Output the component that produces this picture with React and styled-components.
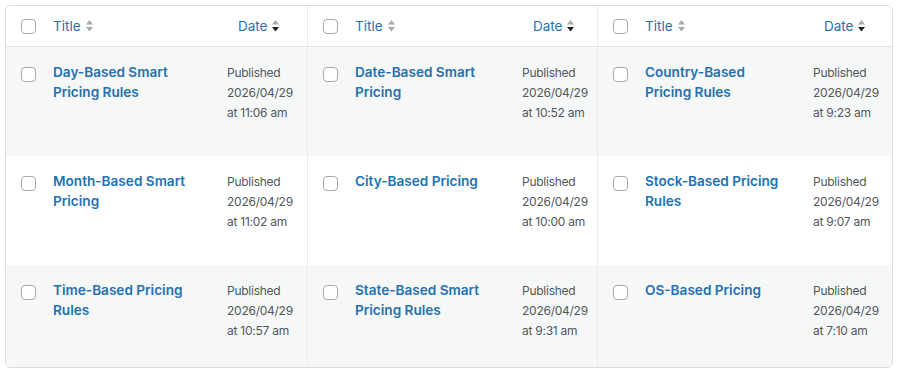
import React from "react";
import styled, { createGlobalStyle } from "styled-components";

const Global = createGlobalStyle`
  html, body { margin: 0; padding: 0; background: #ffffff; }
  body { font-family: Inter, "Open Sans", "Liberation Sans", sans-serif; }
`;

const Page = styled.div`
  padding: 5px 5px 0 5px;
  width: 888px;
`;

const Frame = styled.div`
  display: grid;
  grid-template-columns: 301px 290px 297px;
  border: 1px solid #dcdcde;
  border-radius: 6px;
  overflow: hidden;
  height: 363px;
  box-sizing: border-box;
`;

const Panel = styled.div`
  display: flex;
  flex-direction: column;
  border-left: ${(p) => (p.$first ? "none" : "1px solid #ececee")};
  min-width: 0;
`;

const HeaderRow = styled.div`
  display: grid;
  grid-template-columns: 15px 1fr 70px;
  column-gap: 17px;
  align-items: center;
  height: 40px;
  padding: 0 ${(p) => p.$pr}px 0 15px;
  border-bottom: 1px solid #e2e3e5;
  background: #ffffff;
`;

const Row = styled.div`
  display: grid;
  grid-template-columns: 15px 1fr 70px;
  column-gap: 17px;
  align-items: start;
  height: ${(p) => p.$h}px;
  box-sizing: border-box;
  padding: 16px ${(p) => p.$pr}px 0 15px;
  background: ${(p) => (p.$alt ? "#f6f7f7" : "#ffffff")};
`;

const Check = styled.span`
  display: block;
  width: 15px;
  height: 15px;
  box-sizing: border-box;
  border: 1px solid #a7aaad;
  border-radius: 4px;
  background: #ffffff;
  margin-top: ${(p) => (p.$row ? "4px" : "1px")};
`;

const HeadLink = styled.a`
  display: inline-flex;
  align-items: center;
  gap: 4px;
  color: #2271b1;
  font-size: 13.5px;
  text-decoration: none;
  padding-left: ${(p) => p.$pl || 0}px;
  white-space: nowrap;
`;

const Title = styled.a`
  display: block;
  padding-right: 8px;
  color: #2271b1;
  font-weight: 600;
  font-size: 13.6px;
  line-height: 19.5px;
  text-decoration: none;
`;

const DateText = styled.div`
  color: #50575e;
  font-size: 12px;
  letter-spacing: -0.25px;
  line-height: 20px;
  white-space: nowrap;
`;

const SortIcon = ({ active }) => (
  <svg width="9" height="14" viewBox="0 0 9 14">
    <path d="M4.5 1 L8 5.5 H1 Z" fill="#a7aaad" />
    <path d="M1 8 H8 L4.5 12.5 Z" fill={active ? "#1d2327" : "#a7aaad"} />
  </svg>
);

const panels = [
  {
    pr: 10,
    rows: [
      ["Day-Based Smart Pricing Rules", "11:06 am"],
      ["Month-Based Smart Pricing", "11:02 am"],
      ["Time-Based Pricing Rules", "10:57 am"],
    ],
  },
  {
    pr: 5,
    rows: [
      ["Date-Based Smart Pricing", "10:52 am"],
      ["City-Based Pricing", "10:00 am"],
      ["State-Based Smart Pricing Rules", "9:31 am"],
    ],
  },
  {
    pr: 11,
    rows: [
      ["Country-Based Pricing Rules", "9:23 am"],
      ["Stock-Based Pricing Rules", "9:07 am"],
      ["OS-Based Pricing", "7:10 am"],
    ],
  },
];

const heights = [109, 109, 112];

export default function App() {
  return (
    <>
      <Global />
      <Page>
        <Frame>
          {panels.map((p, i) => (
            <Panel key={i} $first={i === 0}>
              <HeaderRow $pr={p.pr}>
                <Check />
                <HeadLink>
                  Title <SortIcon />
                </HeadLink>
                <HeadLink $pl={11}>
                  Date <SortIcon active />
                </HeadLink>
              </HeaderRow>
              {p.rows.map(([t, time], j) => (
                <Row key={j} $alt={j !== 1} $h={heights[j]} $pr={p.pr}>
                  <Check $row />
                  <Title>{t}</Title>
                  <DateText>
                    Published
                    <br />
                    2026/04/29
                    <br />
                    at {time}
                  </DateText>
                </Row>
              ))}
            </Panel>
          ))}
        </Frame>
      </Page>
    </>
  );
}
